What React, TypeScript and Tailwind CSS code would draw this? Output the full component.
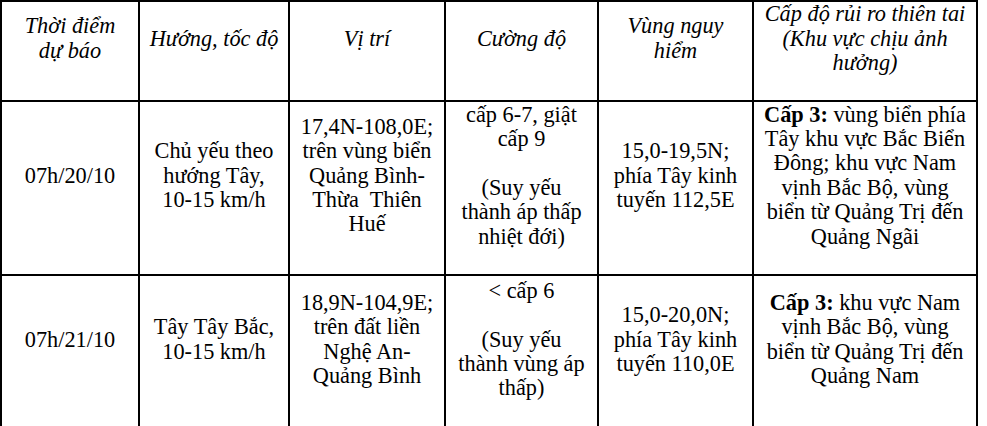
import React from "react";

type Cell = React.ReactNode[];

const headers: string[][] = [
  ["Thời điểm", "dự báo"],
  ["Hướng, tốc độ"],
  ["Vị trí"],
  ["Cường độ"],
  ["Vùng nguy", "hiểm"],
  ["Cấp độ rủi ro thiên tai", "(Khu vực chịu ảnh", "hưởng)"],
];

const rows: Cell[][] = [
  [
    ["07h/20/10"],
    ["Chủ yếu theo", "hướng Tây,", "10-15 km/h"],
    ["17,4N-108,0E;", "trên vùng biển", "Quảng Bình-", "Thừa  Thiên", "Huế"],
    ["cấp 6-7, giật", "cấp 9", "", "(Suy yếu", "thành áp thấp", "nhiệt đới)"],
    ["15,0-19,5N;", "phía Tây kinh", "tuyến 112,5E"],
    [
      <>
        <b>Cấp 3:</b> vùng biển phía
      </>,
      "Tây khu vực Bắc Biển",
      "Đông; khu vực Nam",
      "vịnh Bắc Bộ, vùng",
      "biển từ Quảng Trị đến",
      "Quảng Ngãi",
    ],
  ],
  [
    ["07h/21/10"],
    ["Tây Tây Bắc,", "10-15 km/h"],
    ["18,9N-104,9E;", "trên đất liền", "Nghệ An-", "Quảng Bình"],
    ["< cấp 6", "", "(Suy yếu", "thành vùng áp", "thấp)"],
    ["15,0-20,0N;", "phía Tây kinh", "tuyến 110,0E"],
    [
      <>
        <b>Cấp 3:</b> khu vực Nam
      </>,
      "vịnh Bắc Bộ, vùng",
      "biển từ Quảng Trị đến",
      "Quảng Nam",
    ],
  ],
];

const widths = ["w-[138px]", "w-[150px]", "w-[156px]", "w-[153px]", "w-[155px]", "w-[224px]"];
const rowHeights = ["h-[174px]", "h-[154px]"];

const Lines = ({ lines }: { lines: React.ReactNode[] }) => (
  <div className="pb-[24.4px]">
    {lines.map((l, i) => (
      <div key={i} className="whitespace-pre h-[24.4px]">
        {l}
      </div>
    ))}
  </div>
);

export default function App() {
  return (
    <div
      className="bg-white w-[987px] h-[426px] overflow-hidden text-black text-[22.3px] leading-[24.4px]"
      style={{ fontFamily: '"Liberation Serif", "Times New Roman", serif' }}
    >
      <table className="table-fixed border-collapse w-[978px]">
        <colgroup>
          {widths.map((w, i) => (
            <col key={i} className={w} />
          ))}
        </colgroup>
        <thead>
          <tr className="h-[100px]">
            {headers.map((h, i) => (
              <th
                key={i}
                className="border-2 border-black text-center align-middle font-normal italic p-0"
              >
                <Lines lines={h} />
              </th>
            ))}
          </tr>
        </thead>
        <tbody>
          {rows.map((r, ri) => (
            <tr key={ri} className={rowHeights[ri]}>
              {r.map((c, ci) => (
                <td key={ci} className="border-2 border-black text-center align-middle p-0">
                  <Lines lines={c} />
                </td>
              ))}
            </tr>
          ))}
        </tbody>
      </table>
    </div>
  );
}
